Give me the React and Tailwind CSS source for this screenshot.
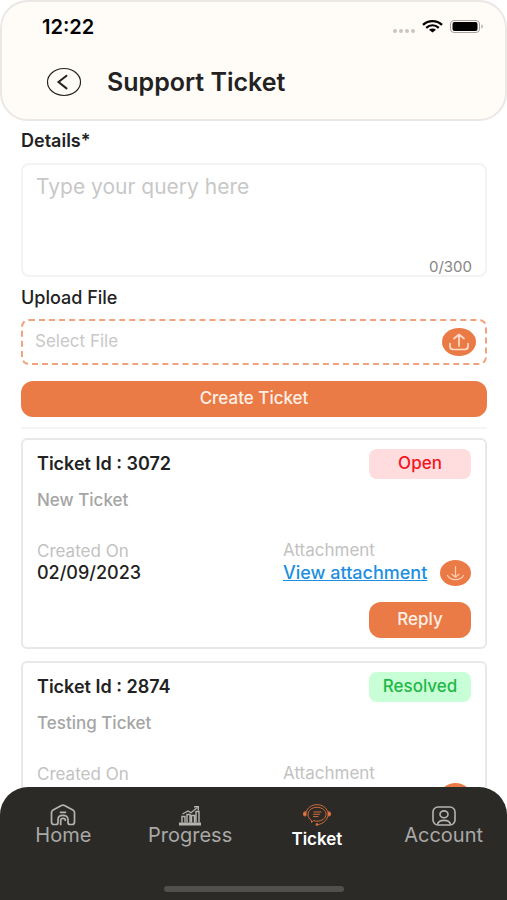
import React from "react";

const tickets = [
  { id: "3072", status: "Open", subject: "New Ticket", created: "02/09/2023" },
  { id: "2874", status: "Resolved", subject: "Testing Ticket", created: "01/09/2023" },
];

function StatusIcons() {
  return (
    <svg className="h-4 w-[92px]" viewBox="0 0 92 16" fill="none" aria-hidden="true">
      <g fill="#c9c5c2">
        <circle cx="3" cy="12" r="2" />
        <circle cx="9" cy="12" r="2" />
        <circle cx="15" cy="12" r="2" />
        <circle cx="21" cy="12" r="2" />
      </g>
      <g stroke="#000" strokeWidth="2.3">
        <path d="M31 5.8C36.4.8 44.6.8 50 5.8" />
        <path d="M34.2 8.8C38 5.5 43 5.5 46.8 8.8" />
      </g>
      <path d="M37 10.8c2-1.7 5-1.7 7 0L40.5 13.5z" fill="#000" />
      <rect x="58.5" y="1.5" width="29" height="12" rx="3.5" stroke="#a5a29f" />
      <rect x="60.5" y="3" width="25" height="9" rx="2" fill="#000" />
      <path d="M89.5 5.5c1.5.6 1.5 3.4 0 4z" fill="#8c8986" />
    </svg>
  );
}

function BackIcon() {
  return (
    <svg className="h-[30px] w-9" viewBox="0 0 36 30" fill="none" stroke="#222" aria-hidden="true">
      <ellipse cx="18" cy="15" rx="16.5" ry="13.5" strokeWidth="1.2" />
      <path d="M20.5 8.8 12.5 15l8 6.4" strokeWidth="2" strokeLinecap="round" />
    </svg>
  );
}

function UploadIcon() {
  return (
    <svg className="h-7 w-[34px]" viewBox="0 0 34 28" fill="none" aria-hidden="true">
      <ellipse cx="17" cy="14" rx="17" ry="14" fill="#eb7b46" />
      <g stroke="#ffdcc8" strokeWidth="1.7" strokeLinecap="round" strokeLinejoin="round">
        <path d="M17 18V7M12 10.5 17 6.5l5 4M8 15.5v3c0 2 1.500 3 3.500 3h11c2 0 3.500-1 3.500-3v-3" />
      </g>
    </svg>
  );
}

function DownloadIcon() {
  return (
    <svg className="h-[26px] w-[31px]" viewBox="0 0 31 26" fill="none" aria-hidden="true">
      <ellipse cx="15.5" cy="13" rx="15.5" ry="13" fill="#eb7b46" />
      <g stroke="#ffd0b5" strokeWidth="1.2" strokeLinecap="round" strokeLinejoin="round">
        <path d="M15.5 6.5V17M12 14.200l3.500 3 3.500-3M7.500 15.500c3 5.500 13 5.500 16 0" />
      </g>
    </svg>
  );
}

function HomeIcon() {
  return (
    <svg className="h-[22px] w-[26px]" viewBox="0 0 26 22" fill="none" stroke="#b5b4b2" strokeWidth="1.7" strokeLinecap="round" strokeLinejoin="round" aria-hidden="true">
      <path d="M1.500 8.500c0-1.200.5-2 1.600-2.600L11.500 1.500c1-.5 2-.5 3 0l8.400 4.400c1.100.6 1.600 1.400 1.600 2.600V18c0 1.700-1 2.500-2.500 2.500h-2c-1.500 0-2-.8-2-2v-3c0-2.500-2-4.200-5-4.200s-5 1.700-5 4.200v3c0 1.200-.5 2-2 2H4c-1.500 0-2.500-.8-2.500-2.500z" />
      <path d="M10.500 8.300h5M10.700 20.500v-4.200c0-1.200.8-2 2.300-2s2.300.8 2.300 2" />
    </svg>
  );
}

function ProgressIcon() {
  return (
    <svg className="h-5 w-6" viewBox="0 0 24 20" fill="none" stroke="#b5b4b2" aria-hidden="true">
      <path d="M1 18h22" strokeWidth="3" />
      <path d="M4 16.500V10.500h3v6M9 16.500V8.500h3v8M13.500 16.500V9.500h3v7M18 16.500V5.500h3v11" strokeWidth="1.4" />
      <path d="M4.500 8 10 5l3 1.800 6-5" strokeWidth="1.2" />
      <path d="M16 .8h4.300v3.600" strokeWidth="1.4" />
    </svg>
  );
}

function TicketIcon() {
  return (
    <svg className="h-[22px] w-7" viewBox="0 0 28 22" fill="none" stroke="#d26c39" strokeWidth="1" strokeLinecap="round" aria-hidden="true">
      <path d="M3 8C5 3 9 .7 14 .7S23 3 25 8M25 12c-1.500 5-5 7.500-9.500 8.500" />
      <path d="M8.500 18v-1.500C6.200 15.200 5 13 5 10.500 5 6.300 9 3.300 14 3.300s9 3 9 6.900-4 7-9 7c-1.200 0-2.200-.1-3-.5z" />
      <path d="M11 8h7M10.500 10.300h6M10.500 12.600h4.500" />
      <path d="M1 8.200C.2 9 .2 11 1 11.800h2V8.200zM27 8.200c.8.800.8 2.800 0 3.600h-2V8.200z" fill="#eb7b46" />
      <circle cx="14" cy="20.500" r="1" fill="#eb7b46" />
    </svg>
  );
}

function AccountIcon() {
  return (
    <svg className="h-5 w-6" viewBox="0 0 24 20" fill="none" stroke="#b5b4b2" strokeWidth="1.6" aria-hidden="true">
      <rect x="1" y="1" width="22" height="18" rx="5" />
      <ellipse cx="12" cy="8.3" rx="4" ry="3.4" />
      <path d="M5.500 18.500c1-5.500 12-5.500 13 0" />
    </svg>
  );
}

function TicketCard({ ticket }) {
  const open = ticket.status === "Open";
  return (
    <article className="rounded-md border-2 border-[#e8e8e8] px-[14px] pt-[9px] pb-[9px]">
      <div className="flex items-center justify-between">
        <h2 className="text-[18px] leading-5 font-semibold text-[#222]">Ticket Id : {ticket.id}</h2>
        <span
          className={
            "flex h-[30px] w-[102px] items-center justify-center rounded-lg text-[17px] font-medium " +
            (open ? "bg-[#ffdcde] text-[#f5141c]" : "bg-[#c9ffd6] text-[#20b947]")
          }
        >
          {ticket.status}
        </span>
      </div>
      <p className="mt-[11px] text-[17px] leading-5 font-medium text-[#a5a5a5]">{ticket.subject}</p>
      <div className="mt-[30px] flex justify-between">
        <div>
          <p className="pt-px text-[17px] leading-5 text-[#c2c2c2]">Created On</p>
          <p className="text-[18px] leading-6 font-medium text-[#222]">{ticket.created}</p>
        </div>
        <div className="w-[188px]">
          <p className="text-[17px] leading-5 text-[#c2c2c2]">Attachment</p>
          <div className="flex items-center justify-between">
            <a href="#attachment" className="text-[18px] leading-6 font-medium text-[#1d8fe0] underline">
              View attachment
            </a>
            <button type="button" aria-label="Download attachment">
              <DownloadIcon />
            </button>
          </div>
        </div>
      </div>
      {open && (
        <div className="mt-4 flex justify-end">
          <button type="button" className="h-9 w-[102px] rounded-xl bg-[#eb7b46] text-[17px] font-medium text-[#fff0e6]">
            Reply
          </button>
        </div>
      )}
    </article>
  );
}

function NavItem({ label, icon, active }) {
  return (
    <a href={"#" + label.toLowerCase()} className="flex flex-1 flex-col items-center">
      <span className="flex h-[22px] items-end">{icon}</span>
      {active ? (
        <span className="mt-[3px] text-[17px] leading-5 font-semibold text-white">{label}</span>
      ) : (
        <span className="text-xl leading-[18px] text-[#a9a8a6]">{label}</span>
      )}
    </a>
  );
}

export default function App() {
  return (
    <div className="flex h-screen flex-col overflow-hidden bg-white font-['Inter','Liberation_Sans',sans-serif]">
      <header className="shrink-0 rounded-[28px] border-2 border-[#ebe7e4] bg-[#fffbf7] pb-[19px]">
        <div className="flex h-[50px] items-center justify-between pr-[21px] pl-10">
          <span className="text-xl leading-6 font-semibold text-black">12:22</span>
          <StatusIcons />
        </div>
        <div className="mt-3 flex h-9 items-center gap-[25px] pl-11">
          <button type="button" aria-label="Back">
            <BackIcon />
          </button>
          <h1 className="text-[25px] leading-8 font-semibold text-[#222]">Support Ticket</h1>
        </div>
      </header>

      <main className="min-h-0 flex-1 overflow-hidden pt-[10px] pr-5 pl-[21px]">
        <form>
          <label htmlFor="details" className="block text-[18px] leading-5 font-semibold text-[#222]">
            Details*
          </label>
          <div className="mt-3 flex h-[114px] flex-col rounded-lg border-2 border-[#f3f3f3] px-[13px]">
            <textarea
              id="details"
              placeholder="Type your query here"
              className="min-h-0 w-full flex-1 resize-none bg-transparent pt-[10px] text-[21px] leading-6 outline-none placeholder:text-[#c8c8c8]"
            />
            <span className="self-end text-[15px] leading-4 text-[#858585]">0/300</span>
          </div>
          <label htmlFor="file" className="mt-[11px] block text-[18px] leading-5 font-medium text-[#222]">
            Upload File
          </label>
          <label
            htmlFor="file"
            className="mt-[11px] flex h-[46px] items-center justify-between rounded-lg border-2 border-dashed border-[#f0a37e] pr-[9px] pl-3"
          >
            <span className="pb-[3px] text-[17px] leading-5 text-[#c8c8c8]">Select File</span>
            <input id="file" type="file" className="sr-only" />
            <UploadIcon />
          </label>
          <button type="button" className="mt-4 h-9 w-full rounded-xl bg-[#eb7b46] text-[17px] font-medium text-[#fff0e6]">
            Create Ticket
          </button>
        </form>
        <hr className="mt-[10px] border-t-2 border-[#f5f5f5]" />
        <section className="mt-[9px] flex flex-col gap-3">
          {tickets.map((t) => (
            <TicketCard key={t.id} ticket={t} />
          ))}
        </section>
      </main>

      <nav className="flex h-[113px] shrink-0 flex-col justify-between rounded-t-[28px] bg-[#2b2a27] pt-[17px] pb-2">
        <div className="flex">
          <NavItem label="Home" icon={<HomeIcon />} />
          <NavItem label="Progress" icon={<ProgressIcon />} />
          <NavItem label="Ticket" icon={<TicketIcon />} active />
          <NavItem label="Account" icon={<AccountIcon />} />
        </div>
        <div className="h-[6px] w-[180px] self-center rounded-full bg-[#51504e]" />
      </nav>
    </div>
  );
}
